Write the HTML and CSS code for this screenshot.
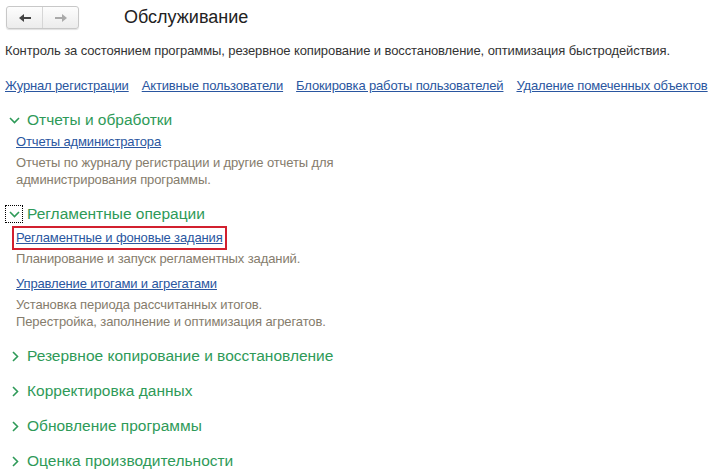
FILE: index.html
```html
<html>
    <head>
        <title>Обслуживание</title>
        <link rel="stylesheet" href="styles.css">
    </head>
    <body>
        <div class="page">
            <div class="topbar">
                <div class="nav">
                    <span class="nav-btn">
                        <svg width="14" height="10" viewBox="0 0 14 10"><path d="M13 5H4" stroke="#444" stroke-width="2"/><path d="M1 5L6 1V9Z" fill="#444"/></svg>
                    </span>
                    <span class="nav-btn">
                        <svg width="14" height="10" viewBox="0 0 14 10"><path d="M1 5H10" stroke="#aaa" stroke-width="2"/><path d="M13 5L8 1V9Z" fill="#aaa"/></svg>
                    </span>
                </div>
                <h1 class="title">Обслуживание</h1>
            </div>

            <p class="intro">Контроль за состоянием программы, резервное копирование и восстановление, оптимизация быстродействия.</p>

            <div class="toplinks">
                <a href="#">Журнал регистрации</a>
                <a href="#">Активные пользователи</a>
                <a href="#">Блокировка работы пользователей</a>
                <a href="#">Удаление помеченных объектов</a>
            </div>

            <!-- открытые группы -->
            <div class="group">
                <div class="group-title">
                    <span class="chev"><svg width="11" height="7" viewBox="0 0 11 7"><path d="M1 1L5.5 5.5L10 1" stroke="#2e9a58" stroke-width="1.6" fill="none"/></svg></span>
                    Отчеты и обработки
                </div>
                <div class="items">
                    <a href="#" class="item-link">Отчеты администратора</a>
                    <p class="item-note">Отчеты по журналу регистрации и другие отчеты для<br>администрирования программы.</p>
                </div>
            </div>

            <div class="group">
                <div class="group-title">
                    <span class="chev focus"><svg width="11" height="7" viewBox="0 0 11 7"><path d="M1 1L5.5 5.5L10 1" stroke="#2e9a58" stroke-width="1.6" fill="none"/></svg></span>
                    Регламентные операции
                </div>
                <div class="items">
                    <a href="#" class="item-link marked">Регламентные и фоновые задания</a>
                    <p class="item-note">Планирование и запуск регламентных заданий.</p>
                    <a href="#" class="item-link">Управление итогами и агрегатами</a>
                    <p class="item-note">Установка периода рассчитанных итогов.<br>Перестройка, заполнение и оптимизация агрегатов.</p>
                </div>
            </div>

            <!-- свернутые группы -->
            <div class="collapsed">
                <div class="group-title"><span class="chev"><svg width="7" height="11" viewBox="0 0 7 11"><path d="M1 1L5.5 5.5L1 10" stroke="#2e9a58" stroke-width="1.6" fill="none"/></svg></span>Резервное копирование и восстановление</div>
                <div class="group-title"><span class="chev"><svg width="7" height="11" viewBox="0 0 7 11"><path d="M1 1L5.5 5.5L1 10" stroke="#2e9a58" stroke-width="1.6" fill="none"/></svg></span>Корректировка данных</div>
                <div class="group-title"><span class="chev"><svg width="7" height="11" viewBox="0 0 7 11"><path d="M1 1L5.5 5.5L1 10" stroke="#2e9a58" stroke-width="1.6" fill="none"/></svg></span>Обновление программы</div>
                <div class="group-title"><span class="chev"><svg width="7" height="11" viewBox="0 0 7 11"><path d="M1 1L5.5 5.5L1 10" stroke="#2e9a58" stroke-width="1.6" fill="none"/></svg></span>Оценка производительности</div>
            </div>
        </div>
    </body>
</html>
```

FILE: styles.css
```css
*{
    margin:0;
    padding:0;
}
body{
    background:#fff;
    font-family:"Liberation Sans", Arial, sans-serif;
    font-size:13px;
    color:#333;
}
a{
    color:#2a56a0;
    text-decoration:underline;
    white-space:nowrap;
    letter-spacing:-0.15px;
}
.page{
    padding:6px 0 0 5px;
}
.topbar{
    display:flex;
    align-items:center;
    height:23px;
}
.nav{
    display:flex;
    margin-left:1px;
    border:1px solid #c8c8c8;
    border-radius:3px;
    background:linear-gradient(#fdfdfd,#ececec);
    box-shadow:0 1px 1px rgba(0,0,0,0.12);
}
.nav-btn{
    display:flex;
    align-items:center;
    justify-content:center;
    width:35px;
    height:21px;
}
.nav-btn + .nav-btn{
    border-left:1px solid #d6d6d6;
}
.title{
    margin-left:45px;
    font-size:18px;
    font-weight:normal;
    color:#222;
}
.intro{
    margin-top:14px;
    line-height:16px;
    letter-spacing:-0.1px;
}
.toplinks{
    display:flex;
    gap:13px;
    margin-top:19px;
    line-height:16px;
}
.group{
    margin-top:17px;
}
.group + .group{
    margin-top:17px;
}
.group-title{
    display:flex;
    align-items:center;
    height:18px;
    font-size:15.5px;
    color:#2e9a58;
    white-space:nowrap;
}
.chev{
    display:flex;
    align-items:center;
    justify-content:center;
    width:16px;
    height:16px;
    margin-right:4px;
    border:1px dotted transparent;
}
.chev.focus{
    border-color:#000;
}
.items{
    padding:5px 0 0 11px;
}
.item-link{
    display:inline-block;
    line-height:16px;
}
.item-link.marked{
    outline:2px solid #d2202f;
    outline-offset:2px;
    margin-top:2px;
}
.item-note{
    margin:4px 0 9px;
    line-height:17px;
    color:#857c6c;
    letter-spacing:-0.1px;
}
.collapsed{
    margin-top:17px;
}
.collapsed .group-title{
    margin-bottom:17px;
}
.collapsed .chev{
    margin-left:1px;
    margin-right:3px;
}
```
